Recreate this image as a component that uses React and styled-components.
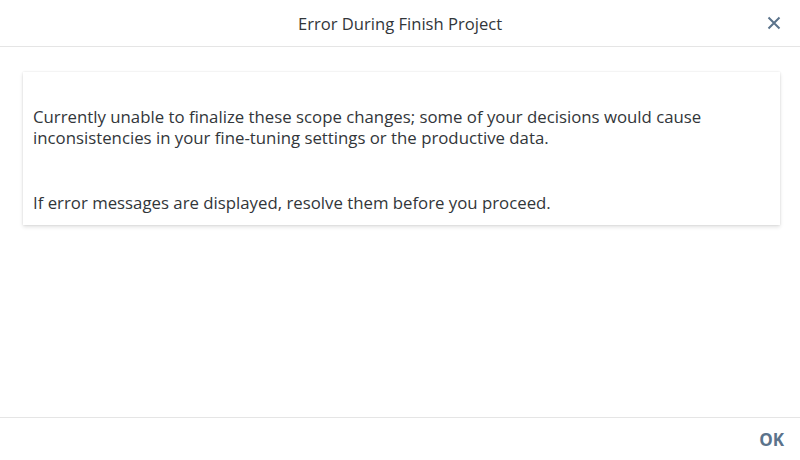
import React from "react";
import styled, { createGlobalStyle } from "styled-components";

const Global = createGlobalStyle`
  html, body {
    margin: 0;
    padding: 0;
    background: #ffffff;
  }
  body {
    font-family: "Open Sans", "Liberation Sans", sans-serif;
    color: #32363a;
  }
`

const Dialog = styled.div`
  display: flex;
  flex-direction: column;
  width: 800px;
  height: 460px;
  background: #ffffff;
`

const Header = styled.div`
  position: relative;
  display: flex;
  align-items: center;
  justify-content: center;
  height: 46px;
  border-bottom: 1px solid #e5e5e5;
  flex-shrink: 0;
`

const Title = styled.h2`
  margin: 0;
  font-size: 16.6px;
  font-weight: 400;
  color: #32363a;
`

const Close = styled.button`
  position: absolute;
  right: 16px;
  top: 50%;
  transform: translateY(-50%);
  display: flex;
  align-items: center;
  justify-content: center;
  width: 20px;
  height: 20px;
  padding: 0;
  border: none;
  background: none;
  cursor: pointer;
`

const Content = styled.div`
  flex: 1;
  padding: 25px 20px 0 23px;
`

const Card = styled.div`
  background: #ffffff;
  box-shadow: 0 0 2px rgba(0, 0, 0, 0.1), 0 2px 4px rgba(0, 0, 0, 0.12);
  padding: 34px 10px 12px;
`

const Text = styled.p`
  margin: 0;
  font-size: 16.8px;
  line-height: 21px;
  color: #32363a;
  margin-top: ${(p) => p.gap || 0}px;
`

const Footer = styled.div`
  display: flex;
  align-items: center;
  justify-content: flex-end;
  height: 42px;
  border-top: 1px solid #e5e5e5;
  padding: 0 16px;
  flex-shrink: 0;
`

const OkButton = styled.button`
  border: none;
  background: none;
  padding: 0;
  font-family: "Open Sans", "Liberation Sans", sans-serif;
  font-size: 17px;
  font-weight: 700;
  color: #5b738b;
  cursor: pointer;
`

function App() {
  return (
    <Dialog>
      <Global />
      <Header>
        <Title>Error During Finish Project</Title>
        <Close aria-label="Close">
          <svg width="14" height="14" viewBox="0 0 14 14">
            <path d="M1.5 1.5 L12.5 12.5 M12.5 1.5 L1.5 12.5" stroke="#5b738b" strokeWidth="2" fill="none" />
          </svg>
        </Close>
      </Header>
      <Content>
        <Card>
          <Text>
            Currently unable to finalize these scope changes; some of your decisions would cause
            inconsistencies in your fine-tuning settings or the productive data.
          </Text>
          <Text gap={44}>If error messages are displayed, resolve them before you proceed.</Text>
        </Card>
      </Content>
      <Footer>
        <OkButton>OK</OkButton>
      </Footer>
    </Dialog>
  );
}

export default App;
